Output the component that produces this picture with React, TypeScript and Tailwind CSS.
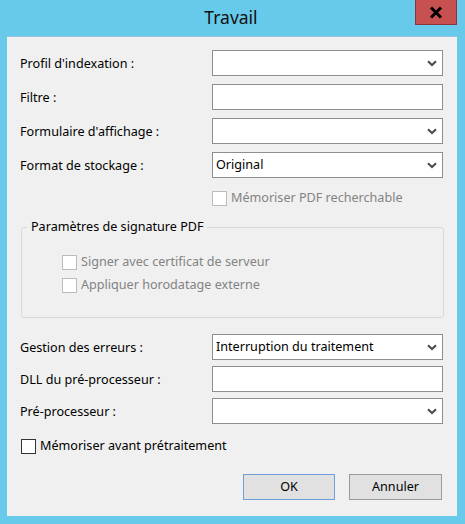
import React from "react";

const font = { fontFamily: '"Noto Sans", "Open Sans", sans-serif' };

function Chevron() {
  return (
    <svg width="10" height="7" viewBox="0 0 10 7" className="shrink-0">
      <path d="M1 1.2 L5 5 L9 1.2" fill="none" stroke="#4a4a4a" strokeWidth="2" />
    </svg>
  );
}

function Combo({ value }: { value?: string }) {
  return (
    <div className="w-[231px] h-[26px] bg-white border border-[#8e8e8e] flex items-center justify-between pl-[3px] pr-[5px] text-[12.6px] text-black">
      <span>{value ?? ""}</span>
      <Chevron />
    </div>
  );
}

function TextBox() {
  return <div className="w-[231px] h-[26px] bg-white border border-[#8e8e8e]" />;
}

function Row({ label, children }: { label: string; children: React.ReactNode }) {
  return (
    <div className="flex items-center h-[26px]">
      <div className="w-[192px] text-[12.6px] text-black pt-[2px]">{label}</div>
      {children}
    </div>
  );
}

function Check({ label, disabled }: { label: string; disabled?: boolean }) {
  return (
    <div className="flex items-center gap-[4px] h-[15px]">
      <div
        className={
          "w-[15px] h-[15px] bg-white border " +
          (disabled ? "border-[#bcbcbc]" : "border-[#333333]")
        }
      />
      <span className={"text-[12.6px] " + (disabled ? "text-[#838383]" : "text-black")}>{label}</span>
    </div>
  );
}

export default function App() {
  return (
    <div className="w-[465px] h-[524px] bg-[#67caea] flex flex-col" style={font}>
      <div className="h-[36px] flex">
        <div className="w-[415px] flex justify-center pt-[5px] pl-[47px]">
          <span className="text-[17.5px] text-[#111] leading-[24px]">Travail</span>
        </div>
        <div className="w-[42px] h-[25px] bg-[#c75050] border border-[#8a3535] border-t-0 flex items-center justify-center">
          <svg width="14" height="13" viewBox="0 0 14 13">
            <path d="M2 1.5 L12 11.5 M12 1.5 L2 11.5" stroke="#000" strokeWidth="3" />
          </svg>
        </div>
      </div>
      <div className="ml-[7px] w-[450px] h-[480px] bg-[#f0f0f0] border-t border-[#9cc4dc] pt-[13px] pl-[13px] pr-[14px] flex flex-col">
        <div className="flex flex-col gap-[8px]">
          <Row label="Profil d'indexation :">
            <Combo />
          </Row>
          <Row label="Filtre :">
            <TextBox />
          </Row>
          <Row label="Formulaire d'affichage :">
            <Combo />
          </Row>
          <Row label="Format de stockage :">
            <Combo value="Original" />
          </Row>
        </div>
        <div className="ml-[192px] mt-[13px]">
          <Check label="Mémoriser PDF recherchable" disabled />
        </div>
        <fieldset className="ml-[1px] mt-[13px] w-[423px] h-[99px] border border-[#d9d9d9] rounded-[3px] p-0">
          <legend className="ml-[5px] px-[4px] text-[12.6px] text-black leading-[16px]">
            Paramètres de signature PDF
          </legend>
          <div className="flex flex-col gap-[8px] ml-[40px] mt-[20px]">
            <Check label="Signer avec certificat de serveur" disabled />
            <Check label="Appliquer horodatage externe" disabled />
          </div>
        </fieldset>
        <div className="flex flex-col gap-[6px] mt-[16px]">
          <Row label="Gestion des erreurs :">
            <Combo value="Interruption du traitement" />
          </Row>
          <Row label="DLL du pré-processeur :">
            <TextBox />
          </Row>
          <Row label="Pré-processeur :">
            <Combo />
          </Row>
        </div>
        <div className="ml-[1px] mt-[15px]">
          <Check label="Mémoriser avant prétraitement" />
        </div>
        <div className="flex justify-end gap-[14px] mt-[20px] pr-[1px]">
          <button className="w-[92px] h-[26px] bg-[#e1e1e1] border border-[#6f9fd8] text-[12.6px] text-black">
            OK
          </button>
          <button className="w-[93px] h-[26px] bg-[#e1e1e1] border border-[#9a9a9a] text-[12.6px] text-black">
            Annuler
          </button>
        </div>
      </div>
    </div>
  );
}
